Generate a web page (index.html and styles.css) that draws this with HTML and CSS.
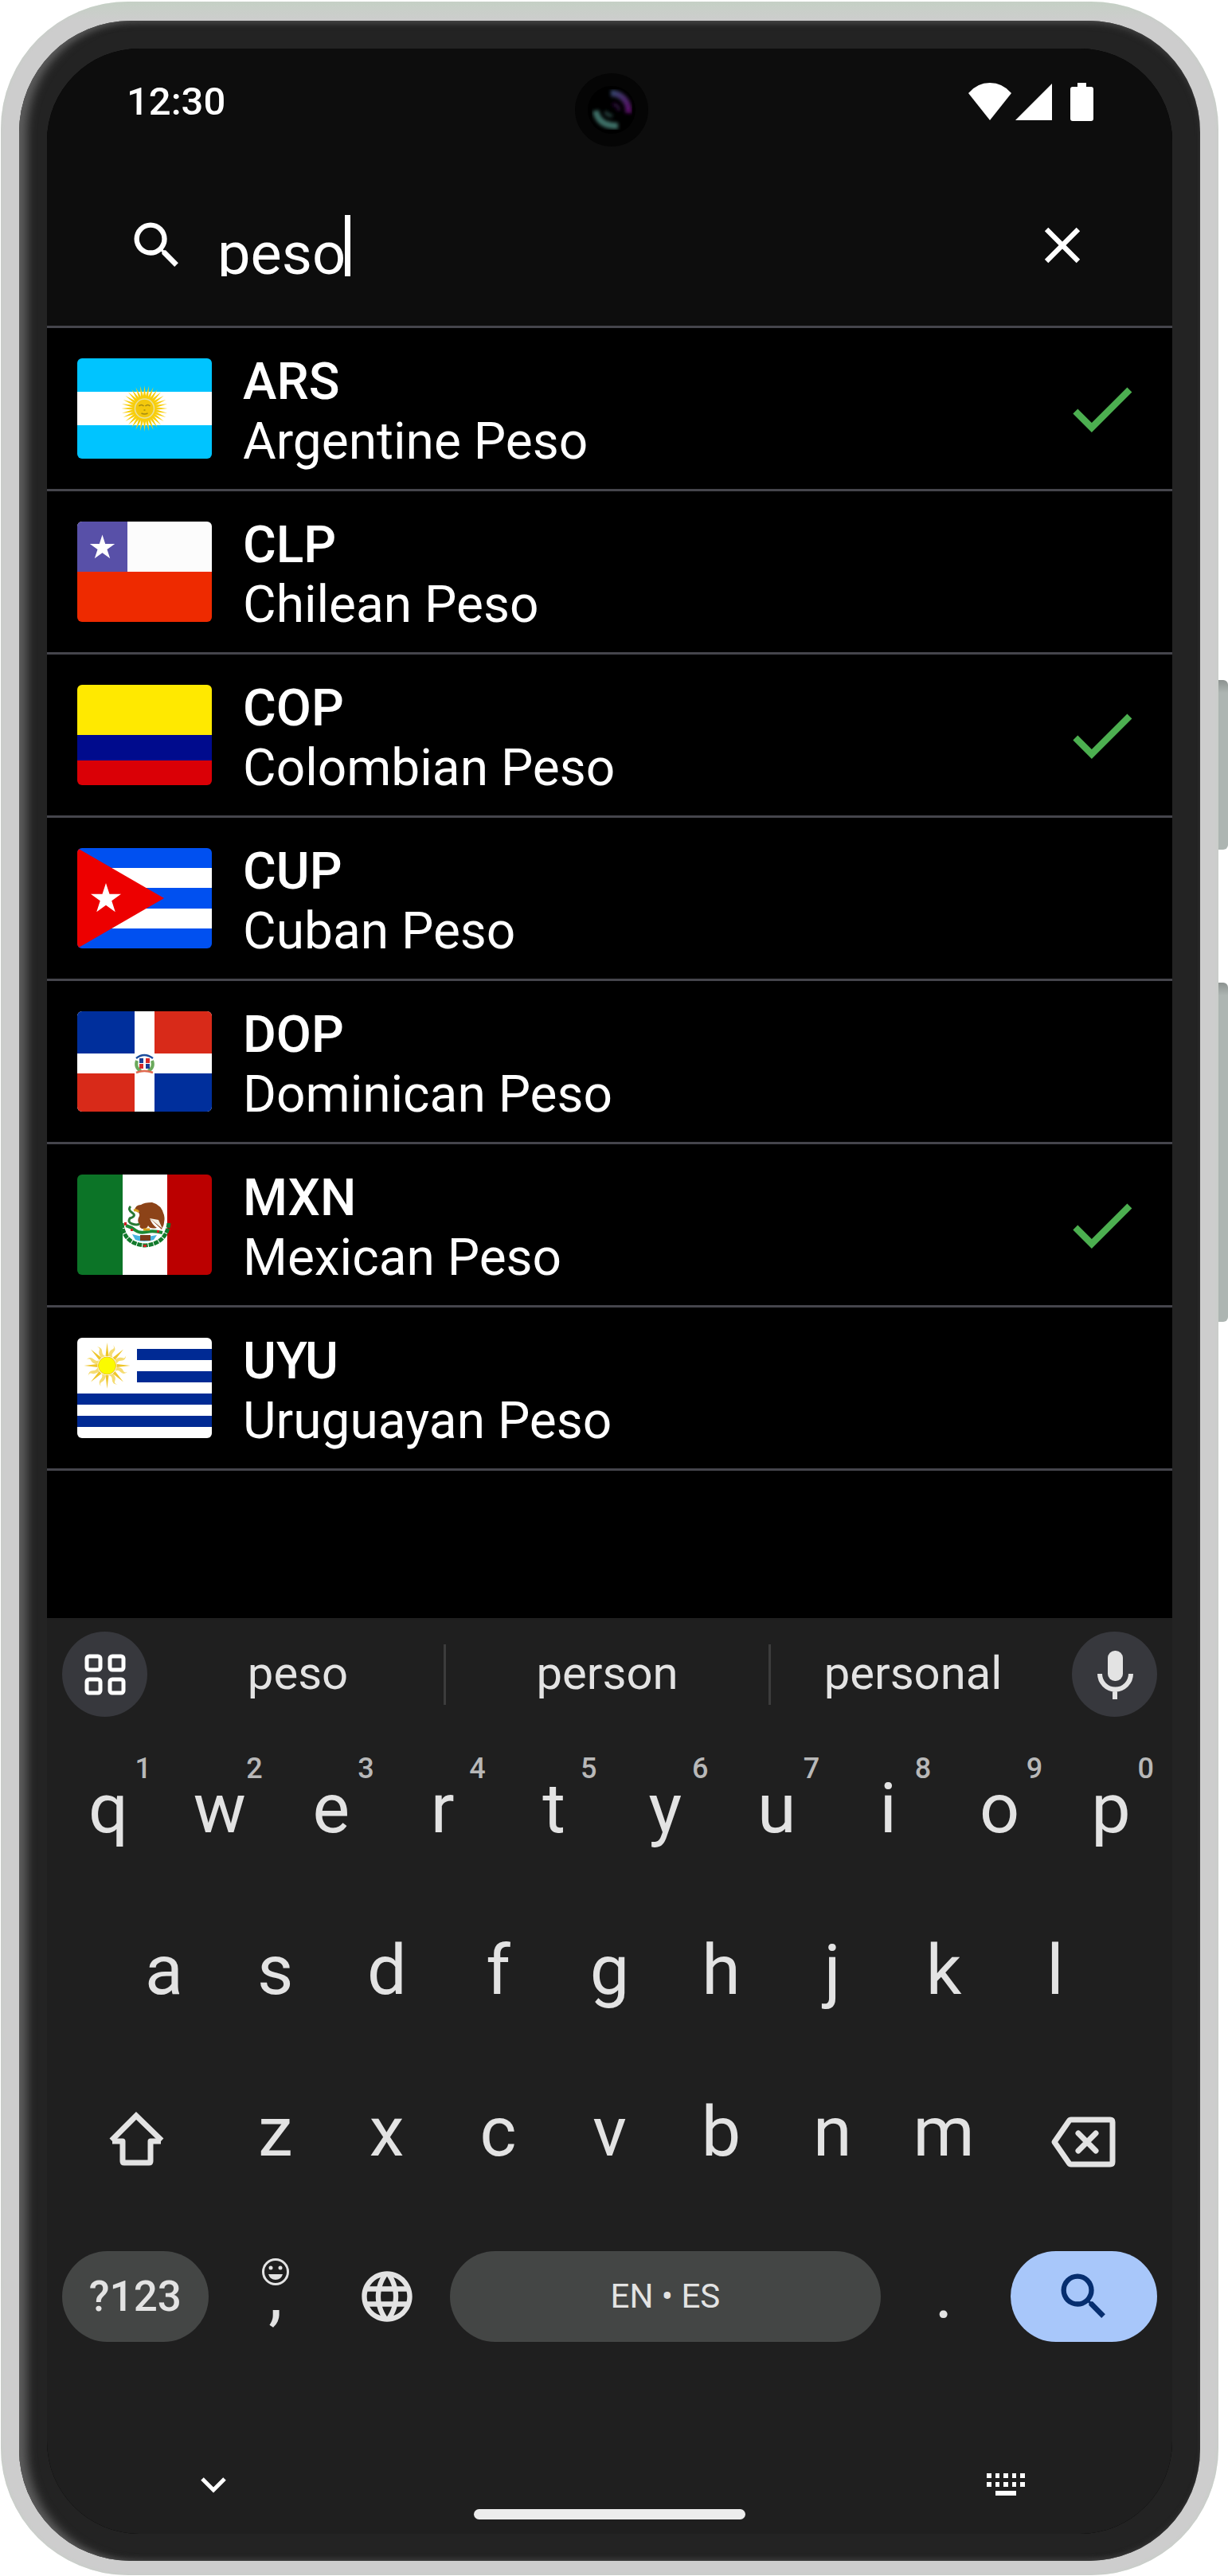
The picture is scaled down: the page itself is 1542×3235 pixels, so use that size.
FILE: index.html
```html
<!DOCTYPE html>
<html lang="en">
<head>
<meta charset="utf-8">
<meta name="viewport" content="width=device-width, initial-scale=1">
<title>Currency search</title>
<link rel="stylesheet" href="styles.css">
</head>
<body>
<svg class="defs" aria-hidden="true">
  <defs>
    <symbol id="search" viewBox="0 0 24 24"><path d="M15.5 14h-.79l-.28-.27A6.47 6.47 0 0 0 16 9.5 6.5 6.5 0 1 0 9.5 16c1.61 0 3.09-.59 4.23-1.57l.27.28v.79l5 4.99L20.49 19l-4.99-5zm-6 0a4.5 4.5 0 1 1 0-9 4.5 4.5 0 0 1 0 9z"/></symbol>
    <symbol id="check" viewBox="0 0 24 24"><path d="M9 16.17 4.83 12l-1.42 1.41L9 19 21 7l-1.41-1.41z"/></symbol>
    <path id="star" d="M0-10 2.25-3.09H9.51L3.63 1.18 5.88 8.09 0 3.82-5.88 8.09-3.63 1.18-9.51-3.09H-2.25z"/>
    <g id="ray4"><path d="M-2-12 0-29 2-12zM-2 12 0 29 2 12zM-12-2-29 0-12 2zM12-2 29 0 12 2z"/></g>
    <g id="wave4"><path d="M-3-12q-2-6 1-9t-1-6q6 3 4 8t2 7zM3 12q2 6-1 9t1 6q-6-3-4-8t-2-7zM-12 3q-6 2-9-1t-6 1q3-6 8-4t7-2zM12-3q6-2 9 1t6-1q-3 6-8 4t-7 2z"/></g>
  </defs>
</svg>

<div class="device">
  <span class="side-button side-button--power"></span>
  <span class="side-button side-button--volume"></span>
  <div class="bezel">
    <div class="screen">
      <header class="top">
        <div class="status">
          <time class="clock">12:30</time>
          <span class="camera"><svg viewBox="0 0 104 104" aria-hidden="true">
            <defs>
              <filter id="soft"><feGaussianBlur stdDeviation="2"/></filter>
              <linearGradient id="lens" x1="0" y1="0" x2="1" y2="1"><stop offset="0" stop-color="#34456a"/><stop offset="1" stop-color="#5a0c66"/></linearGradient>
            </defs>
            <circle cx="52" cy="52" r="46" fill="#050505"/><circle cx="52" cy="52" r="30" fill="#000"/>
            <g fill="none" filter="url(#soft)">
              <path d="M51 31a22 22 0 0 1 22 25" stroke="url(#lens)" stroke-width="8"/>
              <path d="M32 53q4 20 28 19" stroke="#3d6e66" stroke-width="8"/>
              <path d="M53 45q8 0 8 8" stroke="#2a1038" stroke-width="4"/>
              <path d="M44 54q3 6 9 5" stroke="#25433f" stroke-width="4"/>
            </g>
          </svg></span>
          <svg class="status-icons" viewBox="0 0 158 48" role="img" aria-label="Wi-Fi, signal and battery full">
            <path d="M0 13Q11 0 27 0T54 13L27 47z"/><path d="M59 47 105 1V47z"/>
            <path d="M137 0h11v5h6q3 0 3 3v37q0 3-3 3h-23q-3 0-3-3V8q0-3 3-3h6z"/>
          </svg>
        </div>
        <form class="search" role="search">
          <svg class="icon" aria-hidden="true"><use href="#search"/></svg>
          <label class="field"><span class="hidden">Search currencies</span><input type="text" value="peso"><span class="caret"></span></label>
          <button class="plain" type="reset" aria-label="Clear"><svg class="icon" viewBox="0 0 24 24" aria-hidden="true"><path d="M19 6.41 17.59 5 12 10.59 6.41 5 5 6.41 10.59 12 5 17.59 6.41 19 12 13.41 17.59 19 19 17.59 13.41 12z"/></svg></button>
        </form>
      </header>

      <main class="results">
        <ul class="list">
          <li class="row">
            <svg class="flag" viewBox="0 0 169 126" aria-hidden="true"><path fill="#00c4ff" d="M0 0h169v126H0z"/><path fill="#fff" d="M0 42h169v42H0z"/>
              <g transform="translate(84.500 63)" fill="#f8ce0c"><use href="#ray4"/><use href="#ray4" transform="rotate(11.250)"/><use href="#ray4" transform="rotate(22.500)"/><use href="#ray4" transform="rotate(33.750)"/><use href="#ray4" transform="rotate(45)"/><use href="#ray4" transform="rotate(56.250)"/><use href="#ray4" transform="rotate(67.500)"/><use href="#ray4" transform="rotate(78.750)"/><circle r="15"/><circle r="12" fill="#f3c80c" stroke="#e8e0a0" stroke-width="1.500"/><path d="M-7-3q3-3 6 0M1-3q3-3 6 0M-4 6q4 2 8 0M-1 2h2" stroke="#a38a14" stroke-width="1.500" fill="none"/></g></svg>
            <div class="names"><strong class="code">ARS</strong><span>Argentine Peso</span></div>
            <svg class="check" role="img" aria-label="Selected"><use href="#check"/></svg>
          </li>
          <li class="row">
            <svg class="flag" viewBox="0 0 169 126" aria-hidden="true"><path fill="#fcfcfc" d="M0 0h169v63H0z"/><path fill="#ee2a00" d="M0 63h169v63H0z"/><path fill="#5850a8" d="M0 0h63v63H0z"/><use href="#star" fill="#fff" transform="translate(31.500 33) scale(1.650)"/></svg>
            <div class="names"><strong class="code">CLP</strong><span>Chilean Peso</span></div>
          </li>
          <li class="row">
            <svg class="flag" viewBox="0 0 169 126" aria-hidden="true"><path fill="#ffe900" d="M0 0h169v63H0z"/><path fill="#000b8d" d="M0 63h169v32H0z"/><path fill="#da0006" d="M0 95h169v31H0z"/></svg>
            <div class="names"><strong class="code">COP</strong><span>Colombian Peso</span></div>
            <svg class="check" role="img" aria-label="Selected"><use href="#check"/></svg>
          </li>
          <li class="row">
            <svg class="flag" viewBox="0 0 169 126" aria-hidden="true"><path fill="#0050f0" d="M0 0h169v126H0z"/><path fill="#fff" d="M0 25h169v25H0zM0 76h169v25H0z"/><path fill="#ed0000" d="M0 0 109 63 0 126z"/><use href="#star" fill="#fff" transform="translate(36 64) scale(2)"/></svg>
            <div class="names"><strong class="code">CUP</strong><span>Cuban Peso</span></div>
          </li>
          <li class="row">
            <svg class="flag" viewBox="0 0 169 126" aria-hidden="true"><path fill="#fff" d="M0 0h169v126H0z"/><path fill="#002f9c" d="M0 0h72v53H0zM97 78h72v48H97z"/><path fill="#d82a19" d="M97 0h72v53H97zM0 78h72v48H0z"/>
              <g fill="none" stroke-width="2.500"><path d="M74 59q10-8 21 0" stroke="#1c4c9c"/><path d="M75 62q-3 9 5 13M94 62q3 9-5 13" stroke="#6aa95c" stroke-width="4"/><path d="M74 77q10-4 21 0" stroke="#e06a50"/></g><path fill="#1c3f94" d="M78 59h5v6h-5zM86 66h5v6h-5z"/><path fill="#d82a2a" d="M86 59h5v6h-5zM78 66h5v6h-5z"/></svg>
            <div class="names"><strong class="code">DOP</strong><span>Dominican Peso</span></div>
          </li>
          <li class="row">
            <svg class="flag" viewBox="0 0 169 126" aria-hidden="true"><path fill="#0c7427" d="M0 0h57v126H0z"/><path fill="#fff" d="M57 0h56v126H57z"/><path fill="#bb0000" d="M113 0h56v126h-56z"/>
              <path d="M56 61q2 26 29 28 27-2 30-28" fill="none" stroke="#127a2c" stroke-width="5" stroke-dasharray="6 1"/>
              <path d="M61 64q7 2 12 6t14 2 20 1" fill="none" stroke="#1c8a34" stroke-width="4"/>
              <path d="M69 75q15 5 31 1l-4 6q-12 4-23 0z" fill="#49b5e0"/><path d="M79 76h13v7H79z" fill="#7a3a1a"/>
              <path d="M72 45Q73 38 80 38q4-3 14-3 12 3 15 16 2 9-3 18L91 55q3 8 9 12-9 2-11-3-1 5-8 4-4-2-2-4-5-5-1-12 1-5-6-7z" fill="#8c4318"/>
              <path d="M91 55 107 68l-5-11z" fill="#f4f0e4"/><path d="M71 45q4-1 6 2M83 69h8" stroke="#d8a020" stroke-width="3" fill="none"/>
              <path d="M67 40q-4 4 2 8t-3 7q-3 5 3 7t9 0" fill="none" stroke="#2a7a35" stroke-width="3"/><path d="M59 60h3v4h-3zM67 68h3v3h-3zM100 70h3v3h-3zM83 88h4v3h-4z" fill="#c22"/></svg>
            <div class="names"><strong class="code">MXN</strong><span>Mexican Peso</span></div>
            <svg class="check" role="img" aria-label="Selected"><use href="#check"/></svg>
          </li>
          <li class="row">
            <svg class="flag" viewBox="0 0 169 126" aria-hidden="true"><path fill="#fff" d="M0 0h169v126H0z"/><path fill="#002a94" d="M75 14h94v14H75zM75 42h94v14H75zM0 70h169v14H0zM0 98h169v14H0z"/>
              <g transform="translate(37.500 35)"><g fill="#f5dc72"><use href="#wave4" transform="rotate(22.500)"/><use href="#wave4" transform="rotate(67.500)"/></g><g fill="#efc62a"><use href="#ray4"/><use href="#ray4" transform="rotate(45)"/></g><circle r="11" fill="#fbfb00" stroke="#efc62a"/></g></svg>
            <div class="names"><strong class="code">UYU</strong><span>Uruguayan Peso</span></div>
          </li>
        </ul>
      </main>

      <section class="keyboard" aria-label="Keyboard">
        <div class="suggest-bar">
          <button class="round" aria-label="Toolbar"><svg viewBox="0 0 52 52" width="52" height="52" fill="none" stroke="#fff" stroke-width="5"><rect x="3" y="3" width="17" height="17" rx="3"/><rect x="32" y="3" width="17" height="17" rx="3"/><rect x="3" y="32" width="17" height="17" rx="3"/><rect x="32" y="32" width="17" height="17" rx="3"/></svg></button>
          <div class="suggestions">
            <button class="suggestion">peso</button><button class="suggestion">person</button><button class="suggestion">personal</button>
          </div>
          <button class="round" aria-label="Voice input"><svg viewBox="0 0 60 64" width="60" height="64"><rect x="21" y="2" width="19" height="38" rx="9" fill="#e3e3e3"/><path d="M11 31a19 19 0 0 0 39 0M30 50v13" fill="none" stroke="#e3e3e3" stroke-width="6"/></svg></button>
        </div>
        <div class="keys keys--top">
          <button class="key">q<span class="hint">1</span></button><button class="key">w<span class="hint">2</span></button><button class="key">e<span class="hint">3</span></button><button class="key">r<span class="hint">4</span></button><button class="key">t<span class="hint">5</span></button><button class="key">y<span class="hint">6</span></button><button class="key">u<span class="hint">7</span></button><button class="key">i<span class="hint">8</span></button><button class="key">o<span class="hint">9</span></button><button class="key">p<span class="hint">0</span></button>
        </div>
        <div class="keys keys--home">
          <button class="key">a</button><button class="key">s</button><button class="key">d</button><button class="key">f</button><button class="key">g</button><button class="key">h</button><button class="key">j</button><button class="key">k</button><button class="key">l</button>
        </div>
        <div class="keys keys--low">
          <button class="key key--icon" aria-label="Shift"><svg viewBox="0 0 80 80" width="80" height="80" fill="none" stroke="#e3e3e3" stroke-width="7" stroke-linejoin="round"><path stroke-linejoin="miter" d="M9 47 40 16 72 47"/><path d="M10 48h13v25q0 2 2 2h31q2 0 2-2V48h13"/></svg></button>
          <button class="key">z</button><button class="key">x</button><button class="key">c</button><button class="key">v</button><button class="key">b</button><button class="key">n</button><button class="key">m</button>
          <button class="key key--icon" aria-label="Backspace"><svg viewBox="0 0 96 96" width="96" height="96" fill="none" stroke="#e3e3e3" stroke-width="7" stroke-linejoin="round" stroke-linecap="round"><path d="M33 29h49q3 0 3 3v50q0 3-3 3H33q-2 0-3-2L12 57l18-26q1-2 3-2z"/><path d="M42 46l22 22M64 46 42 68"/></svg></button>
        </div>
        <div class="keys keys--bottom">
          <button class="pill pill--symbols">?123</button>
          <button class="key">,<svg class="emoji" viewBox="0 0 36 36" aria-hidden="true"><circle cx="18" cy="18" r="15.500" fill="none" stroke="#e3e3e3" stroke-width="3"/><circle cx="12" cy="13" r="2.500"/><circle cx="24" cy="13" r="2.500"/><path d="M9 21h18q-2 7-9 7t-9-7z"/></svg></button>
          <button class="key key--icon" aria-label="Language"><svg class="icon" viewBox="0 0 24 24"><path d="M11.990 2C6.470 2 2 6.480 2 12s4.470 10 9.990 10C17.520 22 22 17.520 22 12S17.520 2 11.990 2zm6.930 6h-2.950a15.650 15.650 0 0 0-1.380-3.560A8.030 8.030 0 0 1 18.920 8zM12 4.040c.83 1.200 1.480 2.530 1.910 3.960h-3.820c.43-1.430 1.080-2.760 1.910-3.960zM4.260 14C4.100 13.360 4 12.690 4 12s.1-1.360.26-2h3.380c-.08.660-.14 1.320-.14 2s.06 1.340.14 2H4.260zm.82 2h2.950c.32 1.250.78 2.450 1.380 3.560A7.987 7.987 0 0 1 5.080 16zm2.950-8H5.080a7.987 7.987 0 0 1 4.330-3.560A15.650 15.650 0 0 0 8.030 8zM12 19.960c-.83-1.200-1.480-2.530-1.910-3.960h3.820c-.43 1.430-1.080 2.760-1.910 3.960zM14.340 14H9.660c-.09-.660-.16-1.320-.16-2s.07-1.350.16-2h4.680c.09.650.16 1.320.16 2s-.07 1.340-.16 2zm.25 5.560c.6-1.110 1.060-2.310 1.380-3.560h2.950a8.030 8.030 0 0 1-4.330 3.560zM16.360 14c.08-.660.14-1.320.14-2s-.06-1.340-.14-2h3.380c.16.640.26 1.310.26 2s-.1 1.360-.26 2h-3.380z"/></svg></button>
          <button class="pill pill--space">EN • ES</button>
          <button class="key">.</button>
          <button class="pill pill--enter" aria-label="Search"><svg class="icon"><use href="#search"/></svg></button>
        </div>
        <nav class="nav">
          <div class="nav-icons">
            <button class="plain" aria-label="Hide keyboard"><svg viewBox="0 0 48 48" width="48" height="48" fill="none" stroke="#fff" stroke-width="5"><path d="M10 16 24 30 38 16"/></svg></button>
            <button class="plain" aria-label="Switch keyboard"><svg viewBox="0 0 48 48" width="48" height="48" fill="#fff"><path d="M0 9h6v6H0zM11 9h5v6h-5zM21 9h6v6h-6zM32 9h5v6h-5zM42 9h6v6h-6zM0 20h6v6H0zM11 20h5v6h-5zM21 20h6v6h-6zM32 20h5v6h-5zM42 20h6v6h-6zM11 31h26v6H11z"/></svg></button>
          </div>
          <span class="home-bar"></span>
        </nav>
      </section>
    </div>
  </div>
</div>
</body>
</html>
```
FILE: styles.css
```css
* { box-sizing: border-box; }

body {
  margin: 0;
  background: #fff;
  color: #fff;
  font-family: Roboto, "Noto Sans", sans-serif;
}

button {
  border: 0;
  padding: 0;
  background: none;
  color: inherit;
  font: inherit;
}

svg { display: block; }
.defs { position: absolute; width: 0; height: 0; }
.hidden { position: absolute; width: 1px; height: 1px; overflow: hidden; clip-path: inset(50%); }

/* Device frame */
.device {
  position: relative;
  margin: 2px 12px 0 1px;
  padding: 24px 23px 18px;
  border-radius: 160px;
  background: linear-gradient(#c5d0c5, #cdcdcd 24px);
  box-shadow: inset 0 0 4px #c5d0c5;
}

.side-button {
  position: absolute;
  left: 100%;
  width: 12px;
  border-radius: 0 6px 6px 0;
  background: linear-gradient(#8c9290, #adb5b2 16px);
}
.side-button--power { top: 852px; height: 213px; }
.side-button--volume { top: 1232px; height: 426px; }

.bezel {
  padding: 35px 35px 34px;
  border-radius: 140px;
  background: #232323;
  box-shadow: inset 14px 0 12px -4px #5c5c5c, inset 0 6px 8px -3px #444, inset 0 -5px 6px -3px #383838;
}

.screen {
  display: flex;
  flex-direction: column;
  overflow: hidden;
  border-radius: 116px;
  background: #000;
}

/* Status bar and search */
.top { background: #0d0d0d; border-bottom: 3px solid #45454c; }

.status {
  position: relative;
  display: flex;
  justify-content: space-between;
  align-items: center;
  height: 134px;
  padding: 0 98px 0 100px;
}
.clock { font-size: 49px; font-weight: 500; line-height: 60px; }
.camera { position: absolute; left: 50%; top: 25px; width: 104px; margin-left: -50px; }
.status-icons { width: 158px; height: 48px; fill: #fff; }

.search {
  display: flex;
  align-items: center;
  height: 214px;
  padding: 12px 100px 0;
}
.icon { width: 76px; height: 76px; fill: currentColor; }
.plain { display: block; }

.field {
  display: flex;
  flex: 1;
  height: 77px;
  margin-left: 38px;
  overflow: hidden;
}
.field input {
  width: 160px;
  height: 98px;
  padding: 0;
  border: 0;
  outline: 0;
  background: none;
  color: #fff;
  font: 74px/98px Roboto, "Noto Sans", sans-serif;
}
.caret { width: 7px; background: #fff; }

/* Currency list */
.list { margin: 0; padding: 0 0 185px; list-style: none; }

.row {
  display: flex;
  align-items: center;
  height: 205px;
  padding: 0 38px;
  border-bottom: 3px solid #45454c;
}
.flag { width: 169px; height: 126px; border-radius: 6px; }
.names {
  display: flex;
  flex: 1;
  flex-direction: column;
  padding-top: 7px;
  margin-left: 39px;
  font-size: 64px;
  line-height: 75px;
}
.code { font-weight: 500; }
.check { width: 101px; height: 101px; fill: #4caf50; }

/* Keyboard */
.keyboard { background: #1f1f1f; color: #e3e3e3; }

.suggest-bar {
  display: flex;
  align-items: center;
  height: 141px;
  padding: 0 19px;
}
.round {
  display: grid;
  place-items: center;
  width: 107px;
  height: 107px;
  border-radius: 50%;
  background: #37383d;
}
.suggestions {
  display: grid;
  flex: 1;
  grid-template-columns: 366fr 408fr 360fr;
  margin: 0 21px 0 6px;
}
.suggestion { height: 76px; padding-bottom: 4px; font-size: 58px; line-height: 72px; }
.suggestion + .suggestion { border-left: 3px solid #3c3c3c; }

.keys { display: grid; height: 203px; padding: 0 7px; }
.keys--top { grid-template-columns: repeat(10, 1fr); }
.keys--home { grid-template-columns: repeat(9, 1fr); padding: 0 77px; }
.keys--low { grid-template-columns: 3fr repeat(7, 2fr) 3fr; }
.keys--bottom { grid-template-columns: 3fr 2fr 2fr 8fr 2fr 3fr; align-items: center; }

.key {
  position: relative;
  display: grid;
  place-items: center;
  height: 203px;
  padding-bottom: 7px;
  font-size: 88px;
  line-height: 104px;
}
.key--icon { padding-bottom: 0; }
.hint {
  position: absolute;
  top: 28px;
  right: 16px;
  color: #b8b8b8;
  font-size: 36px;
  font-weight: 500;
  line-height: 40px;
}
.emoji { position: absolute; top: 53px; width: 36px; height: 36px; fill: #e3e3e3; }

.pill {
  display: grid;
  place-items: center;
  height: 114px;
  border-radius: 57px;
  background: #444645;
}
.pill--symbols { margin: 0 14px 0 12px; font-size: 53px; font-weight: 500; }
.pill--space { margin: 0 9px; font-size: 42px; }
.pill--enter { margin: 0 12px 0 14px; background: #a8c7fa; color: #062e6f; }

.nav {
  display: flex;
  flex-direction: column;
  align-items: center;
  gap: 6px;
  padding: 112px 0 18px;
}
.nav-icons {
  display: flex;
  align-self: stretch;
  justify-content: space-between;
  padding: 0 185px;
}
.home-bar { width: 341px; height: 13px; border-radius: 7px; background: #ececec; }
```
